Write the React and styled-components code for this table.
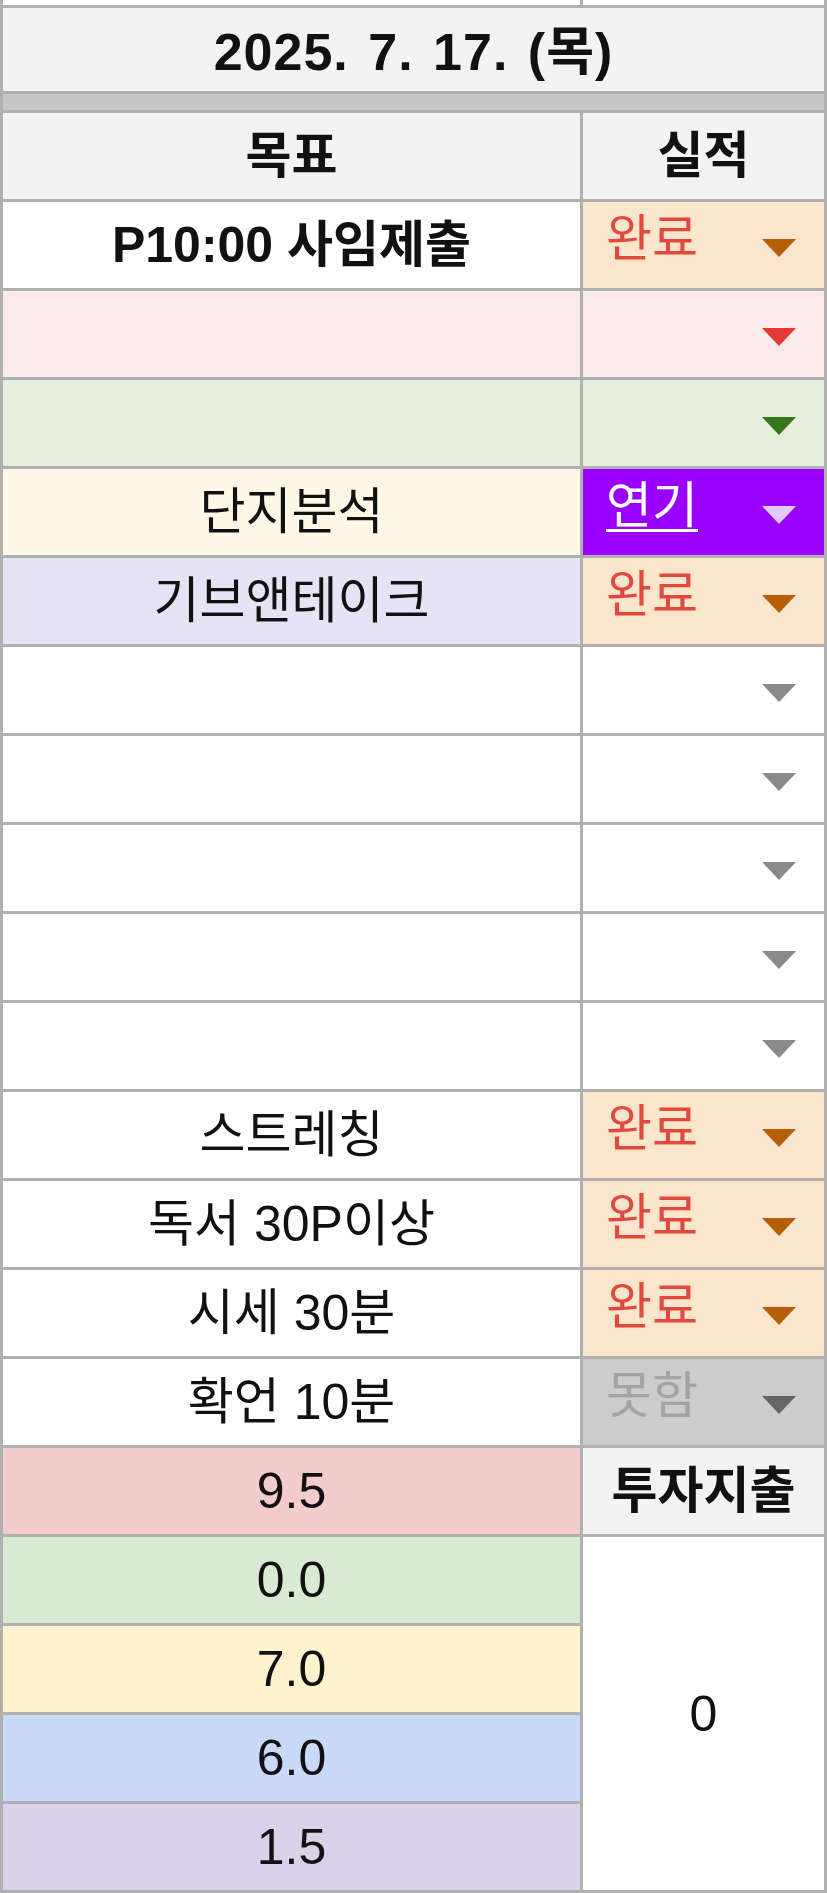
import React from "react";
import styled, { createGlobalStyle } from "styled-components";

const GlobalStyle = createGlobalStyle`
  html, body {
    margin: 0;
    padding: 0;
    background: #ffffff;
  }
  body {
    font-family: "Liberation Sans", "Noto Sans CJK KR", sans-serif;
    color: #111;
  }
`;

const Colors = {
  line: "#b0b0b0",
  band: "#c6c6c6",
  head: "#f3f3f3",
  done: "#fce5cd",
  doneText: "#e0493e",
  doneCaret: "#b45f06",
  purple: "#9900ff",
  gray: "#cccccc",
};

const goals = [
  { text: "P10:00 사임제출", bold: true, bg: "#ffffff", status: "done" },
  { text: "", bg: "#fdeaea", statusBg: "#fdeaea", caret: "#e53935" },
  { text: "", bg: "#e4efdd", statusBg: "#e4efdd", caret: "#38761d" },
  { text: "단지분석", bg: "#fff8e7", status: "delay" },
  { text: "기브앤테이크", bg: "#e7e3f6", status: "done" },
  { text: "" },
  { text: "" },
  { text: "" },
  { text: "" },
  { text: "" },
  { text: "스트레칭", status: "done" },
  { text: "독서 30P이상", status: "done" },
  { text: "시세 30분", status: "done" },
  { text: "확언 10분", status: "fail" },
];

const scores = [
  { value: "9.5", bg: "#f4cccc" },
  { value: "0.0", bg: "#d9ead3" },
  { value: "7.0", bg: "#fff2cc" },
  { value: "6.0", bg: "#c9daf8" },
  { value: "1.5", bg: "#d9d2e9" },
];

const statusLook = {
  done: { label: "완료", bg: Colors.done, color: Colors.doneText, caret: Colors.doneCaret },
  delay: { label: "연기", bg: Colors.purple, color: "#ffffff", caret: "#e2ccff", underline: true },
  fail: { label: "못함", bg: Colors.gray, color: "#a3a3a3", caret: "#666666" },
};

const Sheet = styled.div`
  width: 827px;
  box-sizing: border-box;
  display: grid;
  grid-template-columns: 577px 241px;
  grid-template-rows: 5px 83px 16px;
  grid-auto-rows: 86px;
  gap: 3px;
  padding: 0 3px 3px 3px;
  background: ${Colors.line};
`;

const Stub = styled.div`
  background: #ffffff;
`;

const DateBar = styled.div`
  grid-column: 1 / span 2;
  background: ${Colors.head};
  display: flex;
  align-items: center;
  justify-content: center;
  font-size: 52px;
  font-weight: 700;
  letter-spacing: 1px;
  word-spacing: 4px;
  padding-bottom: 4px;
`;

const Band = styled.div`
  grid-column: 1 / span 2;
  background: ${Colors.band};
`;

const Cell = styled.div`
  background: ${(props) => props.$bg || "#ffffff"};
  display: flex;
  align-items: center;
  justify-content: center;
  font-size: 50px;
  font-weight: ${(props) => (props.$bold ? 700 : 400)};
  line-height: 1;
  white-space: nowrap;
  grid-row: ${(props) => (props.$span ? `span ${props.$span}` : "auto")};
`;

const StatusCell = styled.div`
  background: ${(props) => props.$bg || "#ffffff"};
  display: flex;
  align-items: center;
  justify-content: space-between;
  padding: 0 28px 0 23px;
`;

const Label = styled.span`
  font-size: 50px;
  line-height: 1;
  color: ${(props) => props.$color};
  text-decoration: ${(props) => (props.$underline ? "underline" : "none")};
  text-decoration-thickness: 3px;
  text-underline-offset: 6px;
  margin-bottom: 12px;
`;

const CaretBox = styled.svg`
  width: 34px;
  height: 18px;
  margin-left: auto;
  margin-top: 6px;
  flex: none;
`;

const Caret = ({ color }) => (
  <CaretBox viewBox="0 0 34 18">
    <polygon points="0,0 34,0 17,18" fill={color} />
  </CaretBox>
);

const Status = ({ goal }) => {
  const look = statusLook[goal.status];
  if (!look) {
    return (
      <StatusCell $bg={goal.statusBg}>
        <Caret color={goal.caret || "#8a8a8a"} />
      </StatusCell>
    );
  }
  return (
    <StatusCell $bg={look.bg}>
      <Label $color={look.color} $underline={look.underline}>
        {look.label}
      </Label>
      <Caret color={look.caret} />
    </StatusCell>
  );
};

const App = () => {
  return (
    <>
      <GlobalStyle />
      <Sheet>
        <Stub />
        <Stub />
        <DateBar>2025. 7. 17. (목)</DateBar>
        <Band />
        <Cell $bg={Colors.head} $bold>
          목표
        </Cell>
        <Cell $bg={Colors.head} $bold>
          실적
        </Cell>
        {goals.map((goal, index) => (
          <React.Fragment key={index}>
            <Cell $bg={goal.bg} $bold={goal.bold}>
              {goal.text}
            </Cell>
            <Status goal={goal} />
          </React.Fragment>
        ))}
        {scores.map((score, index) => (
          <React.Fragment key={score.value}>
            <Cell $bg={score.bg}>{score.value}</Cell>
            {index === 0 && (
              <Cell $bg={Colors.head} $bold>
                투자지출
              </Cell>
            )}
            {index === 1 && <Cell $span={4}>0</Cell>}
          </React.Fragment>
        ))}
      </Sheet>
    </>
  );
};

export default App;
